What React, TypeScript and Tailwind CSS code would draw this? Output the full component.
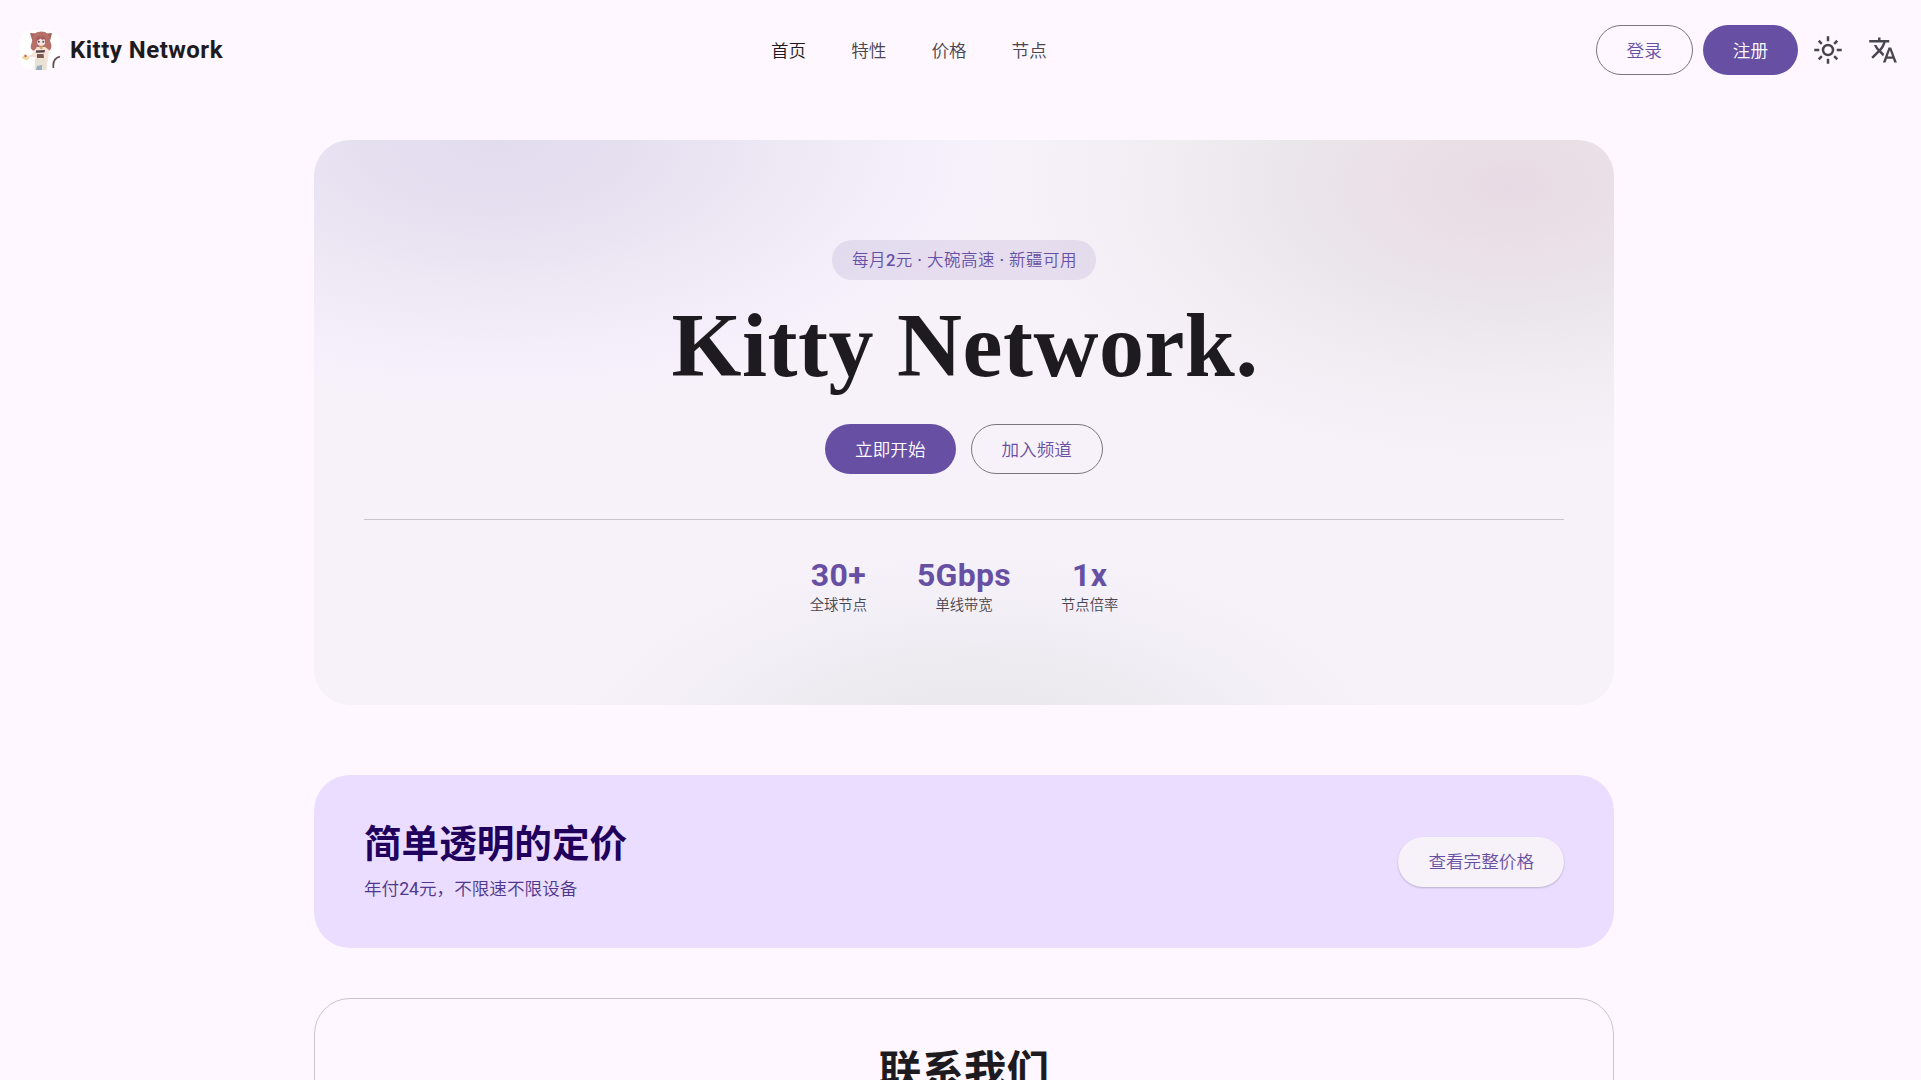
import type { ReactNode } from "react";

const NAV_ITEMS = ["首页", "特性", "价格", "节点"];

const STATS = [
  { value: "30+", label: "全球节点" },
  { value: "5Gbps", label: "单线带宽" },
  { value: "1x", label: "节点倍率" },
];

function CatAvatar() {
  return (
    <svg viewBox="0 0 40 40" className="size-10 rounded-xl bg-white">
      <path d="M10 3 L16.500 3.500 L12.500 11 Z" fill="#a5645a" />
      <path d="M32 3 L26.500 3.500 L30 11 Z" fill="#a5645a" />
      <path d="M12 12 Q11.500 1.500 21 1.500 Q30 1.500 30 11 Q33 17 30 20 Q28 22 25 17 H17 Q15 22 12 20 Q9.500 17 12 12Z" fill="#b5706a" />
      <path d="M17 9 Q20 6.500 25 9 L25 14 Q21 18 17.500 14Z" fill="#f8e5dc" />
      <path d="M15.500 11 Q17 4 21 7 Q25 4 26.500 12 L24 9 L22.500 10 L20.500 8.500 L18 10.500Z" fill="#a85f60" />
      <circle cx="18.800" cy="11.800" r="1" fill="#4a4468" />
      <circle cx="23.300" cy="11.800" r="1" fill="#4a4468" />
      <path d="M17 17 L25 17 L29 20 L28 30 L26 40 L15 40 L15.500 27 L11 27 L5 28 L12 24Z" fill="#f5e2d8" />
      <path d="M19 16.500 L23 16.500 L22.500 19 L20 19Z" fill="#d9ae72" />
      <path d="M16 20.500 L25 20 L24.500 22.500 L16 22.800Z" fill="#584040" />
      <path d="M17 24 L23.500 24 L24 28 L17 28Z" fill="#7b5953" />
      <path d="M15 29 L24.500 29 L27 40 L14.500 40Z" fill="#e6e2d4" />
      <path d="M17 36 L22 35 L22 40 H16Z" fill="#9aabc0" />
      <path d="M1.500 28 L5 24 L9.500 27.500 L7 30.500Z" fill="#ecdba5" />
      <circle cx="5.500" cy="26" r="1.200" fill="#d3605b" />
      <path d="M33.500 38 Q32 28.500 40 26.500" fill="none" stroke="#675055" strokeWidth="1.800" />
    </svg>
  );
}

function SunIcon() {
  return (
    <svg viewBox="0 -960 960 960" className="size-[30px]" fill="currentColor">
      <path d="M480-360q50 0 85-35t35-85q0-50-35-85t-85-35q-50 0-85 35t-35 85q0 50 35 85t85 35Zm0 80q-83 0-141.500-58.500T280-480q0-83 58.500-141.500T480-680q83 0 141.500 58.500T680-480q0 83-58.500 141.500T480-280ZM200-440H40v-80h160v80Zm720 0H760v-80h160v80ZM440-760v-160h80v160h-80Zm0 720v-160h80v160h-80ZM256-650l-101-97 57-59 96 100-52 56Zm492 496-97-101 53-55 101 97-57 59Zm-98-550 97-101 59 57-100 96-56-52ZM154-212l101-97 55 53-97 101-59-57Z" />
    </svg>
  );
}

function TranslateIcon() {
  return (
    <svg viewBox="0 -960 960 960" className="size-[30px]" fill="currentColor">
      <path d="m476-80 182-480h84L924-80h-84l-43-122H603L560-80h-84ZM160-200l-56-56 202-202q-35-35-63.500-80T190-640h84q20 39 40 68t48 58q33-33 68.500-92.500T484-720H40v-80h280v-80h80v80h280v80H564q-21 72-63 148t-83 116l96 98-30 82-122-125-202 201Zm468-72h144l-72-204-72 204Z" />
    </svg>
  );
}

function FilledButton({ children }: { children: ReactNode }) {
  return (
    <button className="h-[50px] rounded-full bg-[#6750a4] px-[30px] pt-0.5 text-[17.6px] font-[350] text-white">
      {children}
    </button>
  );
}

function OutlinedButton({ children }: { children: ReactNode }) {
  return (
    <button className="h-[50px] rounded-full border border-[#79747e] px-[30px] pt-0.5 text-[17.6px] font-[350] text-[#6750a4]">
      {children}
    </button>
  );
}

function Header() {
  return (
    <header className="grid h-[100px] grid-cols-[771px_1fr_auto] items-center pr-[23px] pl-5">
      <div className="flex items-center gap-2.5">
        <CatAvatar />
        <span className="text-2xl font-bold tracking-[0.48px]">Kitty Network</span>
      </div>
      <nav className="-ml-5 flex gap-[45px] pt-0.5 text-[17.6px] font-[350] text-[#49454f]">
        {NAV_ITEMS.map((item, index) => (
          <a key={item} href="#" className={index === 0 ? "text-[#1d1b20]" : ""}>
            {item}
          </a>
        ))}
      </nav>
      <div className="flex items-center text-[#49454f]">
        <div className="mr-[15px] flex gap-2.5">
          <OutlinedButton>登录</OutlinedButton>
          <FilledButton>注册</FilledButton>
        </div>
        <button className="mr-[25px]">
          <SunIcon />
        </button>
        <button>
          <TranslateIcon />
        </button>
      </div>
    </header>
  );
}

function Hero() {
  return (
    <section className="flex h-[565px] flex-col items-center rounded-[36px] bg-[#f7f2fa] bg-[radial-gradient(220px_125px_at_92%_8%,#e8dae4_0%,#ebdee7b0_50%,#ecdfe700_100%),radial-gradient(500px_280px_at_92%_8%,#e8e2e7_0%,#ebe6eb_45%,#f2edf3_70%,#f7f2fa_100%,#f7f2fa00_100%),radial-gradient(510px_265px_at_14%_0%,#e3dcee_0%,#e5dff0_25%,#ede8f4_55%,#f4effa_83%,#f7f2fa00_100%),radial-gradient(420px_215px_at_51%_110%,#e8e4eb_0%,#edeaf0_45%,#f3eff7_72%,#f7f2fa_100%)] px-[50px] pt-[100px]">
      <div className="flex h-10 items-center rounded-[20px] bg-[#6750a41f] pt-0.5 pr-[19px] pl-5 text-[16.5px] tracking-[0.45px] text-[#6750a4]">
        <span className="font-[350] whitespace-nowrap">
          每月<span className="font-medium">2</span>元<span className="font-medium"> · </span>大碗高速
          <span className="font-medium"> · </span>新疆可用
        </span>
      </div>
      <h1 className="mt-3.5 mb-1.5 ml-0.5 h-[104px] font-['Liberation_Serif',serif] text-[90px] leading-[104px] font-bold tracking-[0.5px] text-[#1d1b20]">
        Kitty Network.
      </h1>
      <div className="mt-5 flex gap-[15px]">
        <FilledButton>立即开始</FilledButton>
        <OutlinedButton>加入频道</OutlinedButton>
      </div>
      <div className="mt-[45px] flex w-full justify-center gap-[50px] border-t border-[#cac4d0] pt-9">
        {STATS.map((stat) => (
          <div key={stat.label} className="flex flex-col items-center">
            <span className="text-[32px] leading-[38px] font-bold tracking-[0.3px] text-[#6750a4]">{stat.value}</span>
            <span className="text-[14.3px] leading-[22px] font-[350] text-[#49454f]">{stat.label}</span>
          </div>
        ))}
      </div>
    </section>
  );
}

function Pricing() {
  return (
    <section className="mt-[70px] flex h-[173px] items-center justify-between rounded-[36px] bg-[#eaddff] px-[50px]">
      <div className="pb-[3px]">
        <h2 className="text-[37.6px] leading-[50px] font-bold text-[#21005d]">简单透明的定价</h2>
        <p className="mt-[7px] text-[17.6px] leading-[26px] font-[350] text-[#4f378b]">
          年付<span className="font-normal">24</span>元，不限速不限设备
        </p>
      </div>
      <button className="h-[50px] rounded-full bg-[#f7f2fa] px-[30px] pt-0.5 text-[17.6px] font-[350] text-[#6750a4] shadow-[0_1px_2px_rgba(0,0,0,0.16),0_1px_3px_rgba(0,0,0,0.05)]">
        查看完整价格
      </button>
    </section>
  );
}

function Contact() {
  return (
    <section className="mt-[50px] h-[300px] rounded-[36px] border border-[#cac4d0] pt-[44px] text-center">
      <h2 className="text-[42.6px] leading-[56px] font-bold">联系我们</h2>
    </section>
  );
}

export default function App() {
  return (
    <div className="h-screen overflow-hidden bg-[#fef7ff] font-[Roboto,'Noto_Sans_CJK_SC',sans-serif] text-[#1d1b20]" lang="zh-CN">
      <Header />
      <main className="ml-[314px] w-[1300px] pt-10">
        <Hero />
        <Pricing />
        <Contact />
      </main>
    </div>
  );
}
